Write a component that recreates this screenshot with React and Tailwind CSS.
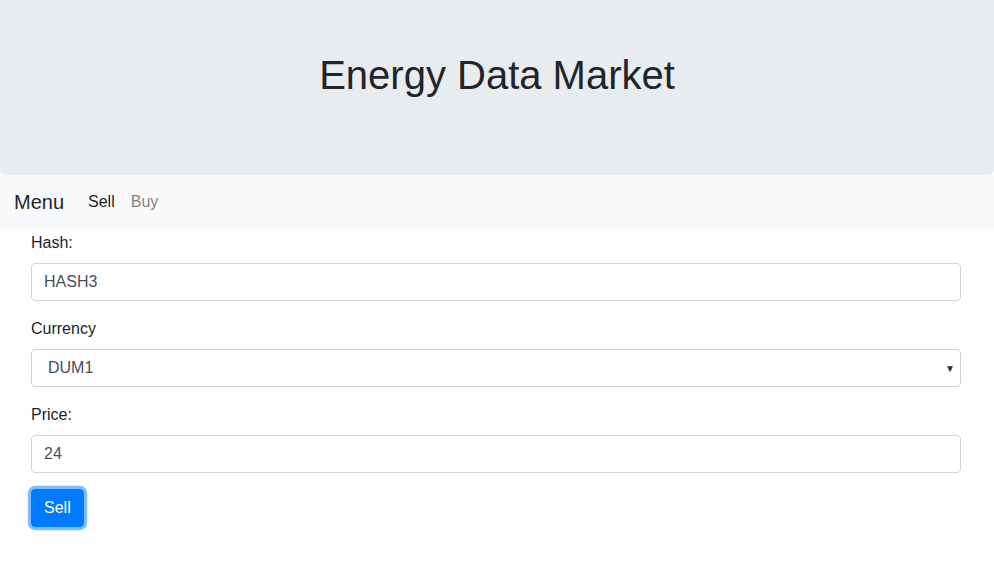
import { useState } from 'react';

const App = () => {
  const [hash, setHash] = useState('HASH3');
  const [currency, setCurrency] = useState('DUM1');
  const [price, setPrice] = useState('24');

  const inputCls =
    'block w-full h-[38px] px-3 py-1.5 text-base leading-6 text-[#495057] bg-white border border-[#ced4da] rounded-[4px] outline-none';

  return (
    <div className="min-h-screen bg-white text-[#212529] font-['Liberation_Sans',Arial,sans-serif]">
      <div className="h-[175px] bg-[#e9ecef] rounded-b-[5px] pt-[51px] flex justify-center">
        <h1 className="text-[40px] leading-[48px] font-normal">Energy Data Market</h1>
      </div>

      <nav className="h-[56px] bg-[#f8f9fa] flex items-center px-[14px] pb-[3px]">
        <span className="text-xl leading-[30px] mr-4">Menu</span>
        <a className="px-2 text-base leading-[30px] text-[rgba(0,0,0,0.9)]">Sell</a>
        <a className="px-2 text-base leading-[30px] text-[rgba(0,0,0,0.5)]">Buy</a>
      </nav>

      <div className="w-[960px] ml-[16px] px-[15px]">
        <div className="mb-4">
          <label className="block mb-2 leading-6">Hash:</label>
          <input className={inputCls} value={hash} onChange={(e) => setHash(e.target.value)} />
        </div>
        <div className="mb-4">
          <label className="block mb-2 leading-6">Currency</label>
          <div className="relative">
            <select
              className={inputCls + ' appearance-none pl-4'}
              value={currency}
              onChange={(e) => setCurrency(e.target.value)}
            >
              <option>DUM1</option>
              <option>DUM2</option>
            </select>
            <span className="absolute right-[6px] top-1/2 -translate-y-1/2 text-[10px] text-[#333] pointer-events-none">
              ▼
            </span>
          </div>
        </div>
        <div className="mb-4">
          <label className="block mb-2 leading-6">Price:</label>
          <input className={inputCls} value={price} onChange={(e) => setPrice(e.target.value)} />
        </div>
        <button className="h-[38px] px-3 text-base leading-6 text-white bg-[#007bff] border border-[#007bff] rounded-[4px] shadow-[0_0_0_3.2px_rgba(0,123,255,0.5)]">
          Sell
        </button>
      </div>
    </div>
  );
};

export default App;
